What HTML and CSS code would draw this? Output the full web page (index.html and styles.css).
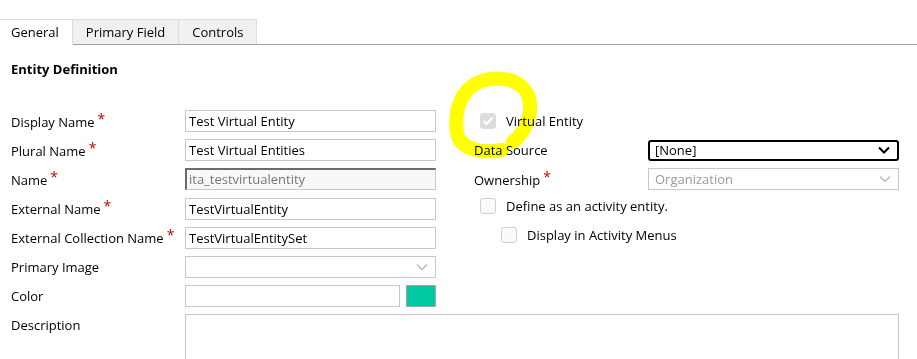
FILE: index.html
```html
<!DOCTYPE html>
<html lang="en">

<head>
  <meta charset="UTF-8">
  <title>Entity Definition</title>
  <link rel="stylesheet" href="styles.css">
</head>

<body>
  <div class="tabs">
    <div class="tab active">General</div>
    <div class="tab">Primary Field</div>
    <div class="tab">Controls</div>
    <div class="tab-rest"></div>
  </div>

  <h2 class="section-title">Entity Definition</h2>

  <div class="form">
    <div class="columns">
      <div class="col-left">
        <div class="row">
          <label>Display Name<span class="req">*</span></label>
          <div class="field">Test Virtual Entity</div>
        </div>
        <div class="row">
          <label>Plural Name<span class="req">*</span></label>
          <div class="field">Test Virtual Entities</div>
        </div>
        <div class="row">
          <label>Name<span class="req">*</span></label>
          <div class="field disabled">ita_testvirtualentity</div>
        </div>
        <div class="row">
          <label>External Name<span class="req">*</span></label>
          <div class="field">TestVirtualEntity</div>
        </div>
        <div class="row">
          <label>External Collection Name<span class="req">*</span></label>
          <div class="field">TestVirtualEntitySet</div>
        </div>
        <div class="row">
          <label>Primary Image</label>
          <div class="field select light">
            <span></span>
            <svg class="chev" width="12" height="8" viewBox="0 0 12 8"><path d="M1 1.5 L6 6.5 L11 1.5" fill="none" stroke="#bbb" stroke-width="1.5"/></svg>
          </div>
        </div>
        <div class="row">
          <label>Color</label>
          <div class="color-field">
            <div class="field"></div>
            <div class="swatch"></div>
          </div>
        </div>
      </div>

      <div class="col-right">
        <div class="check-row first">
          <span class="box checked">
            <svg width="12" height="10" viewBox="0 0 12 10"><path d="M1.5 5 L4.5 8 L10.5 1.5" fill="none" stroke="#fff" stroke-width="2"/></svg>
          </span>
          <span>Virtual Entity</span>
        </div>
        <div class="row">
          <label>Data Source</label>
          <div class="field select active-select">
            <span>[None]</span>
            <svg class="chev" width="12" height="8" viewBox="0 0 12 8"><path d="M1 1.5 L6 6.5 L11 1.5" fill="none" stroke="#000" stroke-width="2"/></svg>
          </div>
        </div>
        <div class="row">
          <label>Ownership<span class="req">*</span></label>
          <div class="field select light">
            <span class="muted">Organization</span>
            <svg class="chev" width="12" height="8" viewBox="0 0 12 8"><path d="M1 1.5 L6 6.5 L11 1.5" fill="none" stroke="#bbb" stroke-width="1.5"/></svg>
          </div>
        </div>
        <div class="check-row">
          <span class="box"></span>
          <span>Define as an activity entity.</span>
        </div>
        <div class="check-row nested">
          <span class="box"></span>
          <span>Display in Activity Menus</span>
        </div>
      </div>
    </div>

    <div class="row desc-row">
      <label>Description</label>
      <div class="textarea"></div>
    </div>
  </div>

  <svg class="scribble" width="917" height="359" viewBox="0 0 917 359">
    <path d="M513 142 C530 128 535 104 525 90 C514 76 488 75 472 86 C459 96 454 115 457 133 C460 149 480 154 502 150" fill="none" stroke="#ffff00" stroke-width="14" stroke-linecap="round"/>
  </svg>
</body>

</html>
```

FILE: styles.css
```css
body {
  margin: 0;
  background-color: #fff;
  color: #000;
  font-family: 'Open Sans', 'Noto Sans', sans-serif;
  font-size: 13px;
}

.tabs {
  display: flex;
  margin-top: 19px;
  height: 26px;
}

.tab {
  padding: 0 13px;
  line-height: 25px;
  background-color: #f0f0f0;
  border: 1px solid #dcdcdc;
  border-bottom: 1px solid #a0a0a0;
  border-left: none;
}

.tab.active {
  padding-left: 11px;
  background-color: #fff;
  border-bottom-color: #fff;
}

.tab-rest {
  flex: 1;
  border-bottom: 1px solid #a0a0a0;
}

.section-title {
  font-size: 13px;
  font-weight: bold;
  margin: 15px 0 0 11px;
}

.form {
  padding: 0 18px 0 11px;
  margin-top: 32px;
}

.columns {
  display: flex;
  gap: 38px;
}

.col-left,
.col-right {
  flex: 1;
  display: flex;
  flex-direction: column;
  gap: 7.2px;
}

.row {
  display: flex;
  align-items: center;
  height: 22px;
}

.row label {
  width: 174px;
  flex-shrink: 0;
}

.req {
  color: #c00;
  margin-left: 3px;
  font-size: 14px;
  position: relative;
  top: -3px;
}

.field {
  flex: 1;
  height: 22px;
  box-sizing: border-box;
  border: 1px solid #c8c8c8;
  padding: 0 3px;
  line-height: 20px;
  white-space: nowrap;
  overflow: hidden;
}

.field.disabled {
  background-color: #f8f8f8;
  color: #777;
  border-top: 2px solid #6a6a6a;
  border-left: 2px solid #6a6a6a;
  padding-left: 2px;
  line-height: 19px;
}

.select {
  display: flex;
  align-items: center;
  justify-content: space-between;
  padding: 0 7px 0 6px;
}

.active-select {
  border: 2px solid #000;
  border-radius: 3px;
  height: 21px;
  padding-left: 5px;
}

.muted {
  color: #9a9a9a;
}

.color-field {
  flex: 1;
  display: flex;
  gap: 6px;
}

.color-field .swatch {
  width: 30px;
  height: 22px;
  box-sizing: border-box;
  background-color: #00c9a2;
  border: 1px solid #a8a8a8;
}

.check-row {
  display: flex;
  align-items: center;
  gap: 10px;
  padding-left: 6px;
  height: 16px;
}

.check-row.first {
  height: 22px;
}

.check-row.nested {
  padding-left: 27px;
  margin-top: 6px;
}

.box {
  width: 16px;
  height: 16px;
  box-sizing: border-box;
  border: 1px solid #d0d0d0;
  border-radius: 3px;
  background-color: #fafafa;
  display: flex;
  align-items: center;
  justify-content: center;
}

.box.checked {
  background-color: #dcdcdc;
  border-color: #dcdcdc;
}

.desc-row {
  margin-top: 7px;
  align-items: flex-start;
  height: auto;
}

.desc-row label {
  margin-top: 2px;
}

.textarea {
  flex: 1;
  height: 60px;
  border: 1px solid #c8c8c8;
}

.scribble {
  position: absolute;
  left: 0;
  top: 0;
  mix-blend-mode: multiply;
  pointer-events: none;
}
```
